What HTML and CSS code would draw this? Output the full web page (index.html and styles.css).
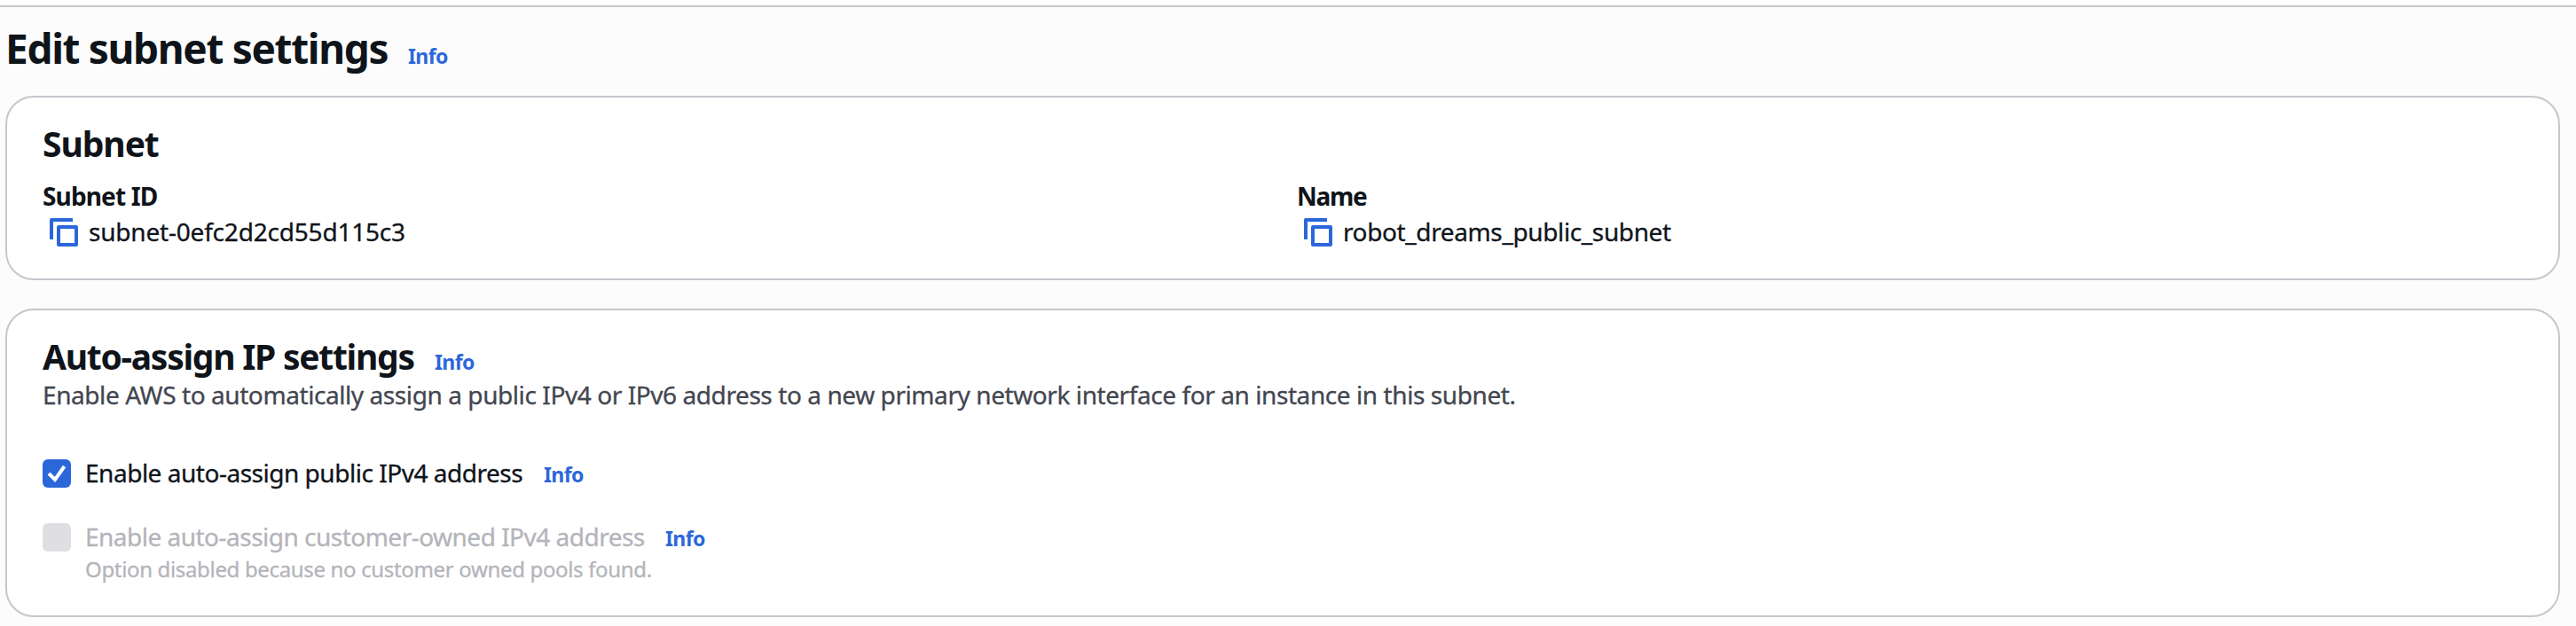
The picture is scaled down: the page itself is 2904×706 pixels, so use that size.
FILE: index.html
```html
<!DOCTYPE html>
<html lang="en">
<head>
<meta charset="utf-8">
<title>Edit subnet settings</title>
<link rel="stylesheet" href="styles.css">
</head>
<body>
<div class="topbar"></div>
<main class="page">
  <header class="page-header">
    <h1 class="page-title">Edit subnet settings</h1>
    <a class="info">Info</a>
  </header>

  <section class="card card-subnet">
    <h2 class="card-title t-subnet">Subnet</h2>
    <div class="columns">
      <div>
        <div class="label l-id">Subnet ID</div>
        <div class="value">
          <svg class="copy" viewBox="0 0 32 32"><path d="M2 24V2H26M10 10H30V30H10Z"/></svg>
          <span class="v-id">subnet-0efc2d2cd55d115c3</span>
        </div>
      </div>
      <div>
        <div class="label l-name">Name</div>
        <div class="value">
          <svg class="copy" viewBox="0 0 32 32"><path d="M2 24V2H26M10 10H30V30H10Z"/></svg>
          <span class="v-name">robot_dreams_public_subnet</span>
        </div>
      </div>
    </div>
  </section>

  <section class="card card-ip">
    <div class="title-row">
      <h2 class="card-title t-ip">Auto-assign IP settings</h2>
      <a class="info">Info</a>
    </div>
    <p class="description">Enable AWS to automatically assign a public IPv4 or IPv6 address to a new primary network interface for an instance in this subnet.</p>

    <div class="option">
      <span class="checkbox checked"><svg viewBox="0 0 32 32"><path d="M7 16L14 23L24.500 8"/></svg></span>
      <div class="option-line"><span class="o-public">Enable auto-assign public IPv4 address</span><a class="info">Info</a></div>
    </div>
    <div class="option disabled">
      <span class="checkbox"></span>
      <div>
        <div class="option-line"><span class="o-owned">Enable auto-assign customer-owned IPv4 address</span><a class="info">Info</a></div>
        <div class="hint">Option disabled because no customer owned pools found.</div>
      </div>
    </div>
  </section>
</main>
</body>
</html>
```
FILE: styles.css
```css
* { box-sizing: border-box; margin: 0; padding: 0; }
body {
  height: 706px;
  overflow: hidden;
  background: #fcfcfd;
  color: #0f141a;
  font: 28px/40px "Noto Sans", "Open Sans", sans-serif;
  white-space: nowrap;
}
.topbar { height: 8px; background: #fff; border-bottom: 2px solid #c6c6cd; }
.page { padding: 16px 18px 0 6px; }
.page-header { display: flex; align-items: baseline; gap: 24px; height: 84px; }
.page-title { font-size: 46px; line-height: 60px; font-weight: 700; width: 430px; letter-spacing: -1.35px; }
.info { color: #2b67d9; font-size: 23px; line-height: 32px; font-weight: 700; letter-spacing: -0.6px; -webkit-text-stroke: 0; }
.card {
  background: #fff;
  border: 2px solid #c6c6cd;
  border-radius: 32px;
  padding: 29px 40px 0;
}
.card-subnet { height: 208px; margin-bottom: 32px; }
.card-ip { height: 348px; }
.card-title { font-size: 39px; line-height: 46px; font-weight: 700; }
.t-subnet { letter-spacing: -1.05px; }
.columns { display: grid; grid-template-columns: 1414px 1fr; margin-top: 16px; }
.label { font-weight: 700; }
.l-id { letter-spacing: -0.85px; }
.l-name { letter-spacing: -1.3px; }
.value { display: flex; gap: 12px; padding-left: 8px; }
.value, .description, .option { -webkit-text-stroke: 0.3px currentColor; }
.v-id { letter-spacing: -0.2px; }
.v-name { letter-spacing: -0.38px; }
.copy { width: 32px; height: 32px; margin-top: 5px; fill: none; stroke: #2b67d9; stroke-width: 4; stroke-linejoin: round; }
.title-row { display: flex; align-items: baseline; height: 46px; }
.t-ip { width: 442px; letter-spacing: -1.27px; }
.description { color: #424650; letter-spacing: -0.42px; }
.option { display: flex; gap: 16px; margin-top: 48px; }
.option.disabled { margin-top: 32px; color: #b4b4bb; }
.checkbox { flex: none; width: 32px; height: 32px; margin-top: 5px; border-radius: 6px; background: #dedee3; }
.checkbox.checked { background: #2b67d9; }
.checkbox svg { display: block; fill: none; stroke: #fff; stroke-width: 4; }
.option-line { display: flex; align-items: baseline; height: 40px; }
.o-public { width: 517px; letter-spacing: -0.48px; }
.o-owned { width: 654px; letter-spacing: -0.51px; }
.hint { font-size: 24px; line-height: 32px; margin-top: 1px; letter-spacing: -0.34px; }
```
